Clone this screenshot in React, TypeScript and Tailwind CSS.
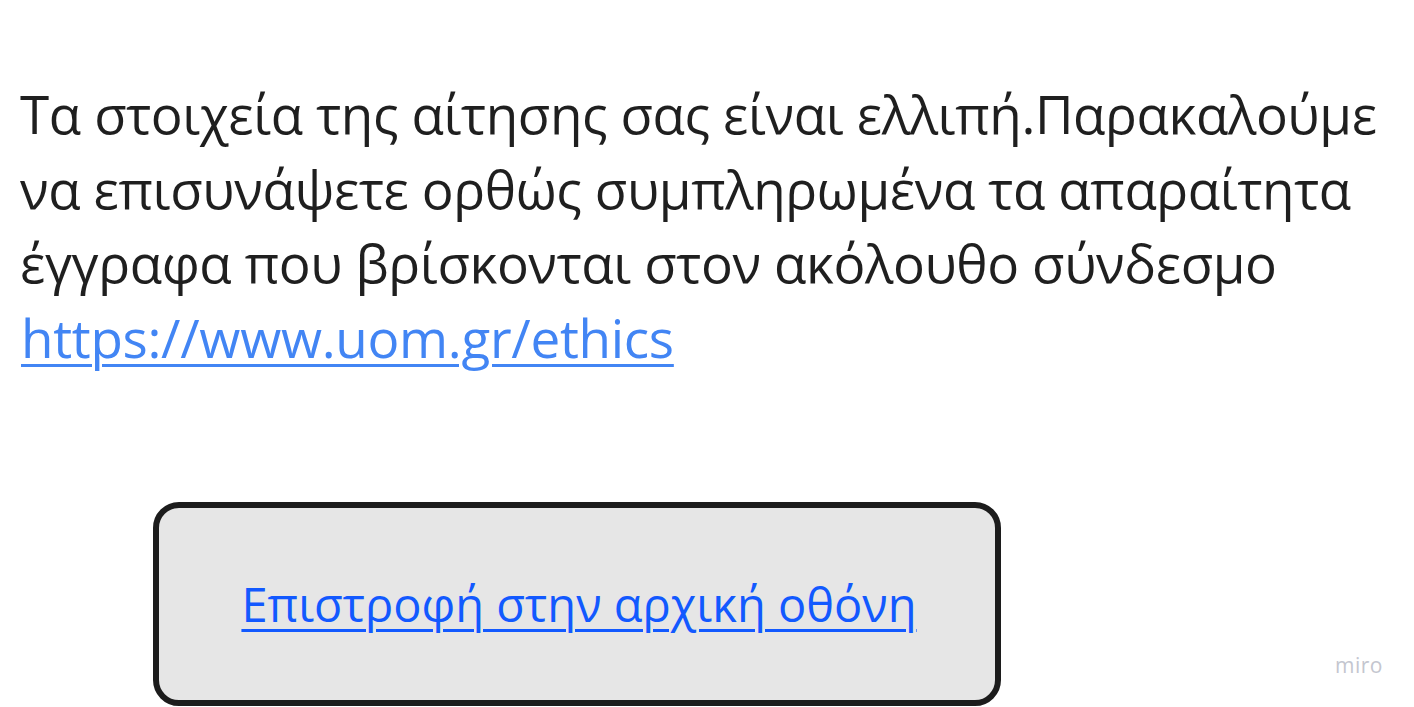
export default function App() {
  return (
    <div
      className="relative h-screen w-full overflow-hidden bg-white"
      style={{ fontFamily: '"Open Sans", "Noto Sans", sans-serif' }}
    >
      <div className="pl-[20px] pr-[20px] pt-[77px]">
        <p className="whitespace-nowrap text-[53px] leading-[74.5px] text-[#1f1f1f]">
          <span className="tracking-[-0.4px]">
            Τα στοιχεία της αίτησης σας είναι ελλιπή.Παρακαλούμε
            <br />
            να επισυνάψετε ορθώς συμπληρωμένα τα απαραίτητα
            <br />
            έγγραφα που βρίσκονται στον ακόλουθο σύνδεσμο
          </span>
          <br />
          <a href="#" className="ml-[1px] text-[#4285f4] underline decoration-[3px] underline-offset-[6px] tracking-[-0.3px]">
            https://www.uom.gr/ethics
          </a>
        </p>
      </div>

      <div className="ml-[153px] mt-[127px] flex h-[204px] w-[848px] items-center justify-center rounded-[26px] border-[6px] border-[#1c1c1c] bg-[#e6e6e6] pl-[4px]">
        <a
          href="#"
          className="text-[47px] leading-none text-[#1259ff] underline decoration-[3px] underline-offset-[7px]"
        >
          Επιστροφή στην αρχική οθόνη
        </a>
      </div>

      <span className="absolute bottom-[26px] right-[31px] text-[21px] tracking-[0.5px] text-[#c4c6cf]">
        miro
      </span>
    </div>
  );
}
